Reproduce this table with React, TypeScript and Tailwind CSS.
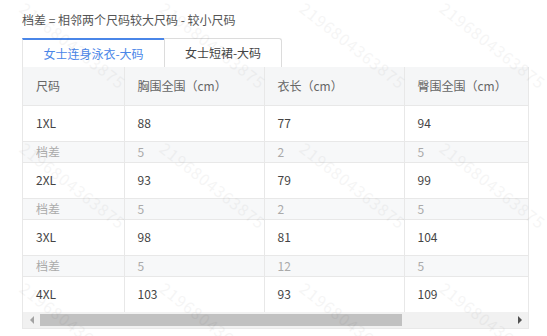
const rows = [
  { size: "1XL", chest: "88", length: "77", hip: "94" },
  { diff: true, chest: "5", length: "2", hip: "5" },
  { size: "2XL", chest: "93", length: "79", hip: "99" },
  { diff: true, chest: "5", length: "2", hip: "5" },
  { size: "3XL", chest: "98", length: "81", hip: "104" },
  { diff: true, chest: "5", length: "12", hip: "5" },
  { size: "4XL", chest: "103", length: "93", hip: "109" },
];

const App = () => {
  const marks: { x: number; y: number }[] = [];
  for (let r = 0; r < 3; r++) {
    for (let c = 0; c < 4; c++) {
      marks.push({ x: 30 + c * 140, y: -4 + r * 140 });
    }
  }

  return (
    <div
      className="relative w-[547px] h-[336px] overflow-hidden bg-white text-[12px] text-[#333]"
      style={{ fontFamily: '"Noto Sans CJK SC", "Noto Sans", sans-serif' }}
    >
      <div className="px-[22px] pt-[11px]">
        <div className="h-[18px] leading-[18px] text-[#555]">
          档差 = 相邻两个尺码较大尺码 - 较小尺码
        </div>

        {/* tabs */}
        <div className="flex mt-[9px] h-[29px]">
          <div className="w-[142px] flex items-center justify-center border-t-2 border-l border-t-[#4a86e8] border-l-[#e6e6e6] text-[#4a86e8] bg-white">
            女士连身泳衣-大码
          </div>
          <div className="w-[118px] flex items-center justify-center border border-b-0 border-[#dcdcdc] rounded-tr-[3px] text-[#444]">
            女士短裙-大码
          </div>
        </div>

        {/* table */}
        <div className="w-[507px] border border-t-0 border-[#e8e8e8] overflow-hidden">
          <table className="w-[670px] table-fixed border-collapse">
            <colgroup>
              <col className="w-[101px]" />
              <col className="w-[140px]" />
              <col className="w-[140px]" />
              <col className="w-[289px]" />
            </colgroup>
            <thead>
              <tr className="h-[38px] bg-[#f5f6f7] text-[#666]">
                <th className="font-normal text-left pl-[13px]">尺码</th>
                <th className="font-normal text-left pl-[13px] border-l border-[#e8e8e8]">胸围全围（cm）</th>
                <th className="font-normal text-left pl-[13px] border-l border-[#e8e8e8]">衣长（cm）</th>
                <th className="font-normal text-left pl-[13px] border-l border-[#e8e8e8]">臀围全围（cm）</th>
              </tr>
            </thead>
            <tbody>
              {rows.map((row, i) => (
                <tr
                  key={i}
                  className={
                    row.diff
                      ? "h-[21px] bg-[#f7f8f9] text-[#aaa] border-t border-[#e8e8e8]"
                      : "h-[36px] bg-white text-[#444] border-t border-[#e8e8e8]"
                  }
                >
                  <td className="pl-[13px]">{row.diff ? "档差" : row.size}</td>
                  <td className="pl-[13px] border-l border-[#e8e8e8]">{row.chest}</td>
                  <td className="pl-[13px] border-l border-[#e8e8e8]">{row.length}</td>
                  <td className="pl-[13px] border-l border-[#e8e8e8]">{row.hip}</td>
                </tr>
              ))}
            </tbody>
          </table>

          {/* scrollbar */}
          <div className="h-[16px] bg-[#f1f1f1] flex items-center">
            <div className="w-[17px] flex justify-center">
              <div className="w-0 h-0 border-y-[4px] border-y-transparent border-r-[4px] border-r-[#a3a3a3]" />
            </div>
            <div className="w-[362px] h-[12px] bg-[#c1c1c1]" />
            <div className="flex-1" />
            <div className="w-[17px] flex justify-center">
              <div className="w-0 h-0 border-y-[4px] border-y-transparent border-l-[4px] border-l-[#505050]" />
            </div>
          </div>
        </div>
      </div>

      {/* watermark */}
      <div className="absolute inset-0 pointer-events-none">
        {marks.map((m, i) => (
          <span
            key={i}
            className="absolute origin-top-left rotate-[38deg] text-[16px] tracking-[1px] text-[#000] opacity-[0.035] whitespace-nowrap"
            style={{ left: m.x, top: m.y }}
          >
            2196804363875
          </span>
        ))}
      </div>
    </div>
  );
};

export default App;
